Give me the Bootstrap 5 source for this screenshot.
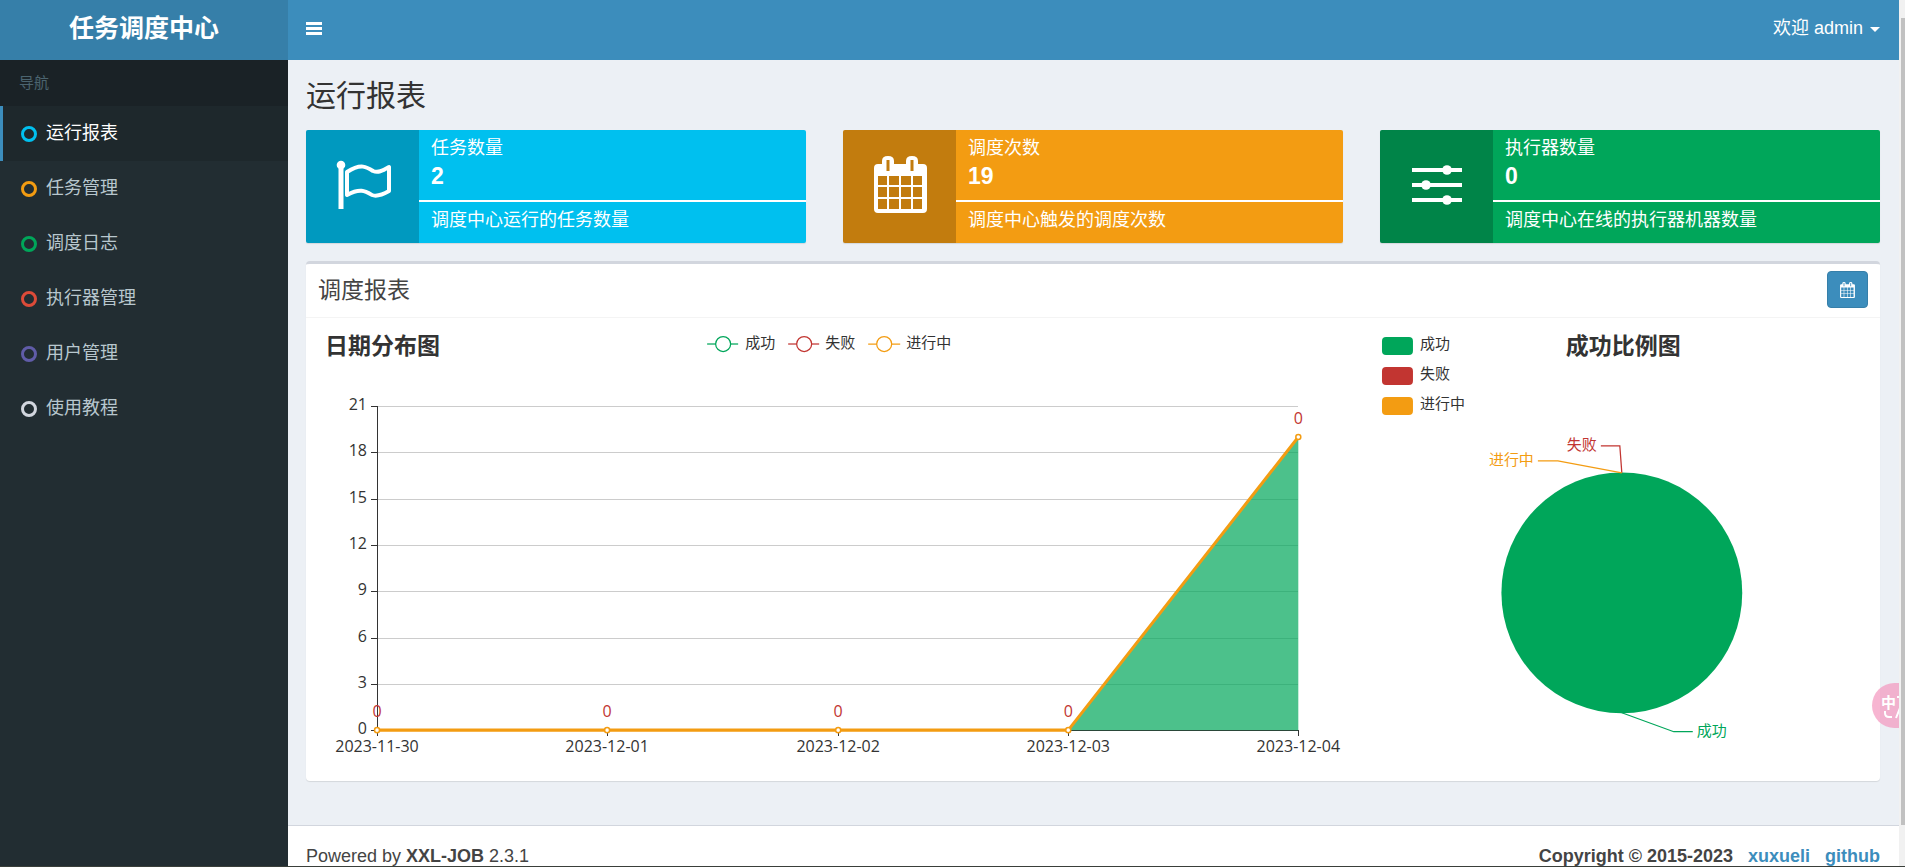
<!DOCTYPE html>
<html lang="zh-CN">
<head>
<meta charset="utf-8">
<meta name="viewport" content="width=device-width, initial-scale=1">
<title>任务调度中心</title>
<link href="https://cdn.jsdelivr.net/npm/bootstrap@5.3.0/dist/css/bootstrap.min.css" rel="stylesheet">
<style>
body{font-family:"Liberation Sans","Noto Sans CJK SC",sans-serif;font-size:18px;line-height:25px;color:#333;background:#ecf0f5}
.shell{height:100vh;overflow:hidden;border-bottom:1px solid #3a3f3a}
a{text-decoration:none}
.side{width:288px;background:#222d32}
.brand{height:60px;background:#367fa9;color:#fff;font-size:25px;font-weight:700;padding-bottom:4px}
.brand:hover{color:#fff}
.side-head{height:46px;padding:0 19px 2px;background:#1a2226;color:#4b646f;font-size:15px}
.side-nav .nav-link{height:55px;padding:0 18px;gap:9px;border-left:3px solid transparent;border-radius:0;color:#b8c7ce}
.side-nav .nav-link.active{background:#1e282c;border-color:#3c8dbc;color:#fff}
.ring{width:16px;height:16px;border:3px solid;border-radius:50%}
.topbar{height:60px;background:#3c8dbc;padding:0 19px 4px 18px}
.topbar button{background:none;border:0;color:#fff;padding:0}
.topbar .dropdown-toggle::after{border-width:5px 5px 0;margin-left:7px;vertical-align:2px}
.content-area{padding:0 19px 0 18px}
h1{font-size:30px;line-height:36px;margin:0;padding:18px 0 16px;font-weight:400}
.stats{--bs-gutter-x:37px}
.stat{height:113px;border-radius:2px;overflow:hidden;color:#fff;box-shadow:0 1px 1px rgba(0,0,0,.1)}
.stat-icon{width:113px;background:rgba(0,0,0,.2);padding:0 0 4px 2px}
.stat-main{padding:6px 12px 0;height:70px}
.stat-note{padding:6px 12px 0;border-top:2px solid #fff}
.stat-num{font-size:23px;line-height:30px}
.aqua{background:#00c0ef}.amber{background:#f39c12}.leaf{background:#00a65a}
.panel{margin-top:18px;background:#fff;border-top:3px solid #d2d6de;border-radius:4px;box-shadow:0 1px 1px rgba(0,0,0,.1)}
.panel-head{height:54px;border-bottom:1px solid #f4f4f4;padding:0 12px 2px}
h2{font-size:23px;line-height:28px;margin:0;color:#444;font-weight:400}
.btn-range{width:41px;height:37px;background:#3c8dbc;border:1px solid #367fa9;border-radius:4px;color:#fff}
.chart{display:block;width:100%;height:auto;font-family:"Open Sans","Noto Sans CJK SC",sans-serif;font-size:15px;fill:#333}
.chart .heading{font-size:23px;font-weight:700}
.chart .axis-text{font-size:16px}
.foot{margin-top:44px;background:#fff;border-top:1px solid #d2d6de;padding:18px 19px 18px 18px;color:#444}
.foot a{color:#3c8dbc;font-weight:700;margin-left:15px}
.rail{width:6px;background:#f1f1f1;padding:18px 0 41px 2px}
.rail div{background:#c1c1c1}
.translate{position:absolute;right:0;top:683px;width:27px;height:45px;border:0;padding:0;background:rgba(244,150,190,.7);border-radius:23px 0 0 23px;overflow:hidden}
</style>
</head>
<body>
<div class="shell d-flex">
  <aside class="side flex-shrink-0 d-flex flex-column">
    <a class="brand d-flex align-items-center justify-content-center" href="#">任务调度中心</a>
    <div class="side-head d-flex align-items-center">导航</div>
    <nav class="side-nav nav flex-column">
      <a class="nav-link active d-flex align-items-center" href="#"><span class="ring" style="color:#00c0ef"></span>运行报表</a>
      <a class="nav-link d-flex align-items-center" href="#"><span class="ring" style="color:#f39c12"></span>任务管理</a>
      <a class="nav-link d-flex align-items-center" href="#"><span class="ring" style="color:#00a65a"></span>调度日志</a>
      <a class="nav-link d-flex align-items-center" href="#"><span class="ring" style="color:#dd4b39"></span>执行器管理</a>
      <a class="nav-link d-flex align-items-center" href="#"><span class="ring" style="color:#605ca8"></span>用户管理</a>
      <a class="nav-link d-flex align-items-center" href="#"><span class="ring" style="color:#d2d6de"></span>使用教程</a>
    </nav>
  </aside>
  <div class="flex-grow-1 position-relative">
    <header class="topbar d-flex align-items-center justify-content-between">
      <button type="button" class="d-flex" aria-label="菜单"><svg width="17" height="13" fill="#fff"><path d="M0 0h16v3H0zM0 5h16v3H0zM0 10h16v3H0z"/></svg></button>
      <button type="button" class="dropdown-toggle">欢迎 admin</button>
    </header>
    <main class="content-area">
      <h1>运行报表</h1>
      <div class="row stats">
        <div class="col-4"><div class="stat aqua d-flex">
          <div class="stat-icon d-flex align-items-center justify-content-center"><svg width="57" height="50" viewBox="0 0 57 50"><circle cx="6" cy="5" r="4.300" fill="#fff"/><path d="M3.500 6h5v43h-5z" fill="#fff"/><path d="M12 12c14-9 20-5 26-1 5 2 9 0 16-4v24c-7 4-12 6-17 4-7-4-12-7-25 0z" fill="none" stroke="#fff" stroke-width="4" stroke-linejoin="round"/></svg></div>
          <div class="flex-grow-1"><div class="stat-main"><div>任务数量</div><div class="stat-num fw-bold">2</div></div><div class="stat-note">调度中心运行的任务数量</div></div>
        </div></div>
        <div class="col-4"><div class="stat amber d-flex">
          <div class="stat-icon d-flex align-items-center justify-content-center"><svg width="53" height="57" viewBox="0 0 53 57"><path fill="#fff" fill-rule="evenodd" d="M4 8h4V5q0-5 6-5t6 5v3h12V5q0-5 6-5t6 5v3h5q4 0 4 4v41q0 4-4 4H4q-4 0-4-4V12q0-4 4-4zM12.500 4v11h3V4zM36.500 4v11h3V4zM4 20v9h9v-9zm11 0v9h10v-9zm12 0v9h10v-9zm12 0v9h9v-9zM4 31v10h9V31zm11 0v10h10V31zm12 0v10h10V31zm12 0v10h9V31zM4 43v10h9V43zm11 0v10h10V43zm12 0v10h10V43zm12 0v10h9V43z"/></svg></div>
          <div class="flex-grow-1"><div class="stat-main"><div>调度次数</div><div class="stat-num fw-bold">19</div></div><div class="stat-note">调度中心触发的调度次数</div></div>
        </div></div>
        <div class="col-4"><div class="stat leaf d-flex">
          <div class="stat-icon d-flex align-items-center justify-content-center"><svg width="50" height="40" viewBox="0 0 50 40" fill="#fff"><path d="M0 3h50v4H0zM0 18h50v4H0zM0 33h50v4H0z"/><circle cx="35" cy="5" r="4.800"/><circle cx="14" cy="20" r="4.800"/><circle cx="35" cy="35" r="4.800"/></svg></div>
          <div class="flex-grow-1"><div class="stat-main"><div>执行器数量</div><div class="stat-num fw-bold">0</div></div><div class="stat-note">调度中心在线的执行器机器数量</div></div>
        </div></div>
      </div>
      <section class="panel">
        <div class="panel-head d-flex align-items-center justify-content-between">
          <h2>调度报表</h2>
          <button type="button" class="btn-range d-flex align-items-center justify-content-center p-0" aria-label="选择日期"><svg width="15" height="16" viewBox="0 0 53 57"><path fill="#fff" fill-rule="evenodd" d="M4 8h4V5q0-5 6-5t6 5v3h12V5q0-5 6-5t6 5v3h5q4 0 4 4v41q0 4-4 4H4q-4 0-4-4V12q0-4 4-4zM12.500 4v11h3V4zM36.500 4v11h3V4zM4 20v9h9v-9zm11 0v9h10v-9zm12 0v9h10v-9zm12 0v9h9v-9zM4 31v10h9V31zm11 0v10h10V31zm12 0v10h10V31zm12 0v10h9V31zM4 43v10h9V43zm11 0v10h10V43zm12 0v10h10V43zm12 0v10h9V43z"/></svg></button>
        </div>
        <div class="row g-0">
          <div class="col-8">
            <svg class="chart" viewBox="0 0 1049 463" role="img" aria-label="日期分布图">
              <text class="heading" x="19" y="36">日期分布图</text>
              <g fill="#fff" stroke-width="1.250">
                <g stroke="#00a65a"><path d="M401 26h31"/><circle cx="417" cy="26" r="7.500"/></g>
                <g stroke="#c23531"><path d="M482 26h31"/><circle cx="498" cy="26" r="7.500"/></g>
                <g stroke="#f39c12"><path d="M562 26h32"/><circle cx="578" cy="26" r="7.500"/></g>
              </g>
              <text x="439" y="30">成功</text><text x="519" y="30">失败</text><text x="600" y="30">进行中</text>
              <path d="M71 88H992M71 134H992M71 181H992M71 227H992M71 273H992M71 320H992M71 366H992" stroke="#ccc" shape-rendering="crispEdges"/>
              <path d="M71 412H992M71 88V418M65 88h6M65 134h6M65 181h6M65 227h6M65 273h6M65 320h6M65 366h6M65 412h6M301 412v6M532 412v6M762 412v6M992 412v6" stroke="#333" shape-rendering="crispEdges"/>
              <g class="axis-text" text-anchor="end"><text x="61" y="92">21</text><text x="61" y="138">18</text><text x="61" y="185">15</text><text x="61" y="231">12</text><text x="61" y="277">9</text><text x="61" y="324">6</text><text x="61" y="370">3</text><text x="61" y="416">0</text></g>
              <g class="axis-text" text-anchor="middle"><text x="71" y="434">2023-11-30</text><text x="301" y="434">2023-12-01</text><text x="532" y="434">2023-12-02</text><text x="762" y="434">2023-12-03</text><text x="992" y="434">2023-12-04</text></g>
              <path d="M762 412L992 119V412z" fill="#00a65a" fill-opacity=".7"/>
              <path d="M71 412H762L992 119" fill="none" stroke="#f39c12" stroke-width="3" stroke-linejoin="bevel"/>
              <g fill="#fff" stroke="#f39c12" stroke-width="1.500"><circle cx="71" cy="412" r="2.500"/><circle cx="301" cy="412" r="2.500"/><circle cx="532" cy="412" r="2.500"/><circle cx="762" cy="412" r="2.500"/><circle cx="992" cy="119" r="2.500"/></g>
              <g class="axis-text" text-anchor="middle" fill="#c23531"><text x="71" y="399">0</text><text x="301" y="399">0</text><text x="532" y="399">0</text><text x="762" y="399">0</text><text x="992" y="106">0</text></g>
            </svg>
          </div>
          <div class="col-4">
            <svg class="chart" viewBox="0 0 525 463" role="img" aria-label="成功比例图">
              <rect x="27" y="19" width="31" height="18" rx="4" fill="#00a65a"/><rect x="27" y="49" width="31" height="18" rx="4" fill="#c23531"/><rect x="27" y="79" width="31" height="18" rx="4" fill="#f39c12"/>
              <text x="65" y="31">成功</text><text x="65" y="61">失败</text><text x="65" y="91">进行中</text>
              <text class="heading" x="211" y="36">成功比例图</text>
              <circle cx="267" cy="275" r="120.500" fill="#00a65a"/>
              <g fill="none" stroke-width="1.250"><path d="M267 155l-2-27h-19" stroke="#c23531"/><path d="M267 155l-64-12h-20" stroke="#f39c12"/><path d="M267 395l52 19h19" stroke="#00a65a"/></g>
              <text x="212" y="132" fill="#c23531">失败</text><text x="134" y="147" fill="#f39c12">进行中</text><text x="342" y="418" fill="#00a65a">成功</text>
            </svg>
          </div>
        </div>
      </section>
    </main>
    <footer class="foot d-flex justify-content-between">
      <div>Powered by <b>XXL-JOB</b> 2.3.1</div>
      <div class="d-flex"><b>Copyright © 2015-2023</b><a href="#">xuxueli</a><a href="#">github</a></div>
    </footer>
    <button type="button" class="translate" aria-label="翻译"><svg class="d-block" width="27" height="45" viewBox="0 0 27 45"><text x="9" y="25" font-size="15" font-weight="700" fill="#fff">中</text><path d="M13 28v2q0 4 4 4h3M24 35l4-10M25 14h3" fill="none" stroke="#fff" stroke-width="2"/></svg></button>
  </div>
  <div class="rail d-flex flex-shrink-0"><div class="flex-grow-1"></div></div>
</div>
<script src="https://cdn.jsdelivr.net/npm/bootstrap@5.3.0/dist/js/bootstrap.bundle.min.js"></script>
</body>
</html>
